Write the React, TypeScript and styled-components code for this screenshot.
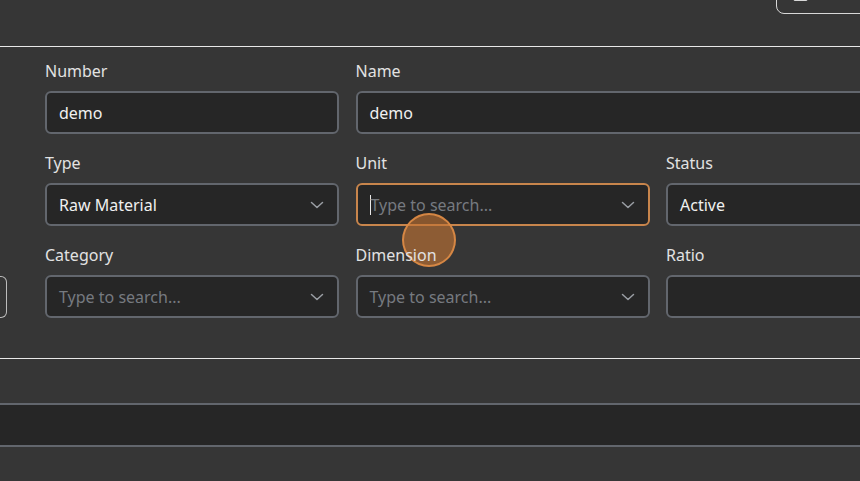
import React from "react";
import styled, { createGlobalStyle } from "styled-components";

const GlobalStyle = createGlobalStyle`
  html, body {
    margin: 0;
    padding: 0;
    background: #363636;
    overflow: hidden;
  }
  body {
    font-family: "Noto Sans", "Open Sans", sans-serif;
    color: #e6e6e6;
  }
`;

const Page = styled.div`
  width: 860px;
  height: 481px;
  overflow: hidden;
  background: #363636;
`;

const TopBar = styled.div`
  height: 46px;
  display: flex;
  justify-content: flex-end;
  align-items: flex-start;
  border-bottom: 1px solid #e8e8e8;
`;

const ToolButton = styled.div`
  width: 120px;
  height: 40px;
  flex-shrink: 0;
  margin-top: -26px;
  margin-right: -36px;
  box-sizing: border-box;
  border: 1px solid #d8d8d8;
  border-radius: 8px;
  display: flex;
  align-items: flex-end;
  padding: 0 0 12px 16px;
`;

const ToolIcon = styled.div`
  width: 13px;
  height: 14px;
  border: 1.5px solid #d8d8d8;
  border-radius: 2px;
`;

const FormArea = styled.div`
  display: flex;
  height: 312px;
  border-bottom: 1px solid #e8e8e8;
  box-sizing: border-box;
`;

const SideColumn = styled.div`
  width: 7px;
  flex-shrink: 0;
  margin-right: 38px;
  display: flex;
  flex-direction: column;
  justify-content: flex-end;
  padding-bottom: 40px;
`;

const SideButton = styled.div`
  height: 42px;
  box-sizing: border-box;
  border: 1px solid #bdbdbd;
  border-left: none;
  border-radius: 0 6px 6px 0;
`;

const Grid = styled.div`
  flex-shrink: 0;
  display: grid;
  grid-template-columns: repeat(3, 294px);
  column-gap: 16.5px;
  row-gap: 17px;
  padding-top: 12px;
  align-content: start;
`;

const Field = styled.div<{ $span?: number }>`
  display: flex;
  flex-direction: column;
  grid-column: span ${(p) => p.$span ?? 1};
  position: relative;
`;

const Label = styled.label`
  font-size: 16px;
  line-height: 24px;
  color: #e2e2e2;
  margin-bottom: 8px;
`;

const Box = styled.div<{ $focused?: boolean }>`
  height: 43px;
  box-sizing: border-box;
  background: #262626;
  border: 2px solid ${(p) => (p.$focused ? "#c8854c" : "#62666d")};
  border-radius: 6px;
  display: flex;
  align-items: center;
  padding: 0 13px 0 12px;
  font-size: 16px;
  color: #f0f0f0;
`;

const Value = styled.span<{ $placeholder?: boolean }>`
  flex: 1;
  white-space: nowrap;
  color: ${(p) => (p.$placeholder ? "#767a80" : "#f0f0f0")};
`;

const Caret = styled.span`
  display: inline-block;
  width: 1px;
  height: 20px;
  background: #e8e8e8;
`;

const ClickMark = styled.div`
  position: absolute;
  left: 46px;
  top: 62px;
  width: 54px;
  height: 54px;
  box-sizing: border-box;
  border-radius: 50%;
  background: rgba(196, 116, 52, 0.62);
  border: 2px solid rgba(222, 140, 70, 0.9);
  pointer-events: none;
`;

const Spacer = styled.div`
  height: 44px;
`;

const Band = styled.div`
  height: 40px;
  background: #262626;
  border-top: 2px solid #62666d;
  border-bottom: 2px solid #62666d;
`;

const Chevron = () => (
  <svg width="14" height="8" viewBox="0 0 14 8" fill="none">
    <path d="M1.5 1.5 L7 6.5 L12.5 1.5" stroke="#9a9ea4" strokeWidth="1.5" strokeLinecap="round" strokeLinejoin="round" />
  </svg>
);

interface InputProps {
  label: string;
  value?: string;
  placeholder?: string;
  select?: boolean;
  focused?: boolean;
  span?: number;
  children?: React.ReactNode;
}

const Input: React.FC<InputProps> = ({ label, value, placeholder, select, focused, span, children }) => (
  <Field $span={span}>
    <Label>{label}</Label>
    <Box $focused={focused}>
      {focused && <Caret />}
      <Value $placeholder={!value}>{value || placeholder || ""}</Value>
      {select && <Chevron />}
    </Box>
    {children}
  </Field>
);

export default function App() {
  return (
    <Page>
      <GlobalStyle />
      <TopBar>
        <ToolButton>
          <ToolIcon />
        </ToolButton>
      </TopBar>
      <FormArea>
        <SideColumn>
          <SideButton />
        </SideColumn>
        <Grid>
          <Input label="Number" value="demo" />
          <Input label="Name" value="demo" span={2} />
          <Input label="Type" value="Raw Material" select />
          <Input label="Unit" placeholder="Type to search..." select focused>
            <ClickMark />
          </Input>
          <Input label="Status" value="Active" select />
          <Input label="Category" placeholder="Type to search..." select />
          <Input label="Dimension" placeholder="Type to search..." select />
          <Input label="Ratio" />
        </Grid>
      </FormArea>
      <Spacer />
      <Band />
    </Page>
  );
}
